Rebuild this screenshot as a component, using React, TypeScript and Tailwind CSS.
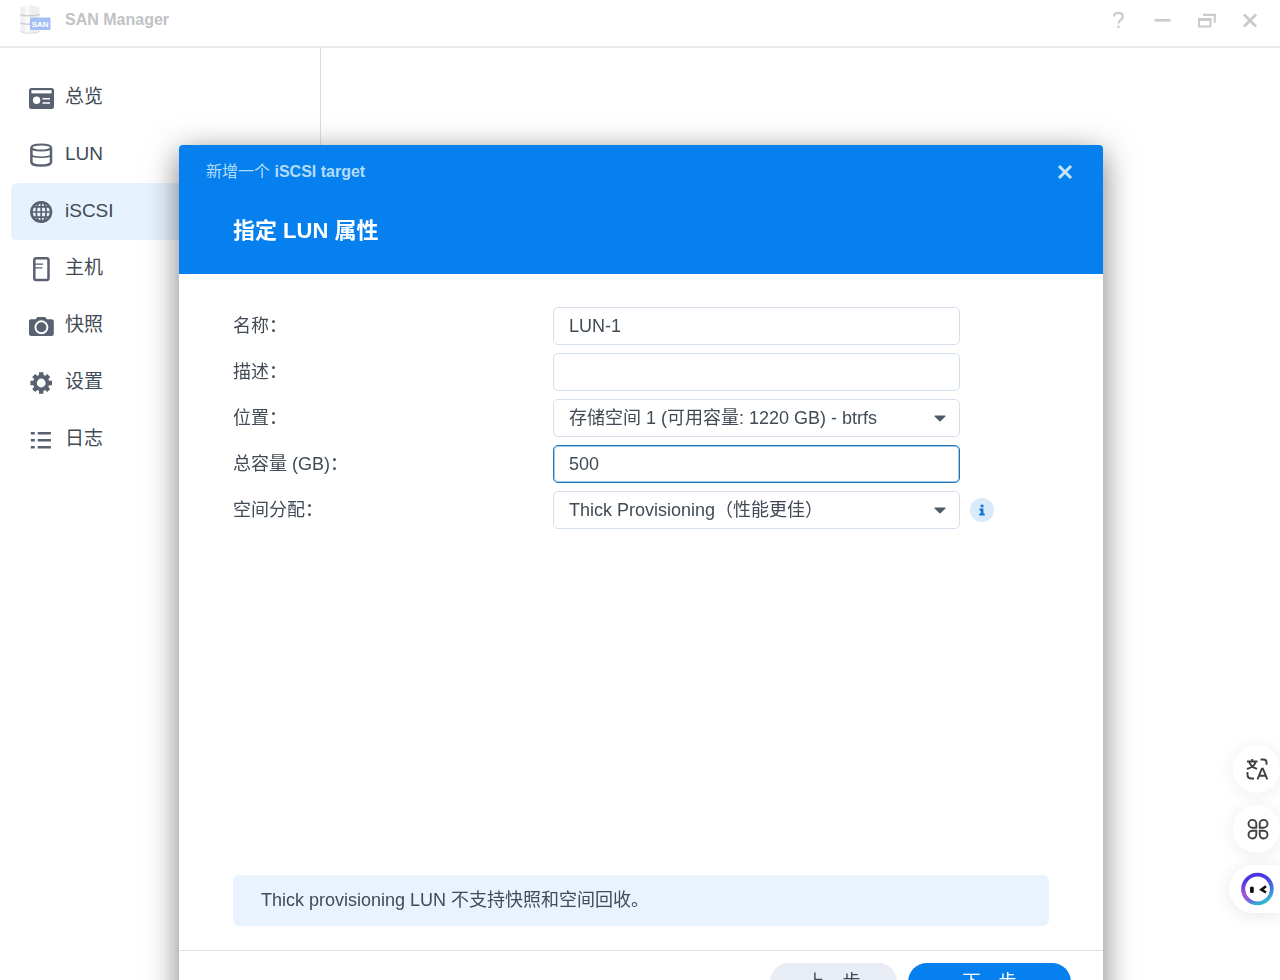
import { useState } from "react";
import type { ReactNode } from "react";
import clsx from "clsx";

type NavItem = {
  id: string;
  label: string;
  icon: ReactNode;
};

const NAV_ITEMS: NavItem[] = [
  {
    id: "overview",
    label: "总览",
    icon: (
      <>
        <rect x="1" y="3" width="25" height="21" rx="2.5" fill="currentColor" />
        <rect x="3.4" y="5.2" width="20.2" height="3.2" fill="#fff" />
        <circle cx="8.6" cy="15.3" r="3.7" fill="#fff" />
        <path d="M14.5 13.8h7.5M14.5 18h7.5" stroke="#fff" strokeWidth="1.6" />
      </>
    ),
  },
  {
    id: "lun",
    label: "LUN",
    icon: (
      <g fill="none" stroke="currentColor">
        <path d="M3.4 5.500v14.700c0 1.900 4.300 3.400 9.800 3.400s9.800-1.500 9.800-3.400V5.500" strokeWidth="2.5" />
        <ellipse cx="13.2" cy="5.500" rx="9.8" ry="3" strokeWidth="2" />
        <path d="M3.4 12.400c0 1.600 4.300 2.800 9.800 2.800s9.800-1.200 9.800-2.800" strokeWidth="1.5" />
      </g>
    ),
  },
  {
    id: "iscsi",
    label: "iSCSI",
    icon: (
      <g fill="none" stroke="currentColor" strokeWidth="1.7">
        <circle cx="13.2" cy="13" r="9.8" strokeWidth="2.6" />
        <ellipse cx="13.2" cy="13" rx="5" ry="9.8" />
        <path d="M13.2 3v20M3.5 13h19.5M5 7.8h16.4M5 18.2h16.4" />
      </g>
    ),
  },
  {
    id: "host",
    label: "主机",
    icon: (
      <g fill="none" stroke="currentColor">
        <rect x="6.3" y="2.2" width="14.2" height="21.8" rx="1.8" strokeWidth="2.5" />
        <path d="M7 8.2h8.2M7 11.8h7.4" strokeWidth="1.3" />
      </g>
    ),
  },
  {
    id: "snapshot",
    label: "快照",
    icon: (
      <>
        <path
          d="M3 6.2h4.6l1.8-2.3h7.8L19 6.2h4.6c1.3 0 2.2.9 2.2 2.2v12.4c0 1.3-.9 2.2-2.2 2.2H3.2C1.9 23 1 22.1 1 20.8V8.4C1 7.1 1.8 6.2 3 6.2z"
          fill="currentColor"
        />
        <circle cx="13.4" cy="14.3" r="6" fill="none" stroke="#fff" strokeWidth="1.9" />
      </>
    ),
  },
  {
    id: "settings",
    label: "设置",
    icon: (
      <>
        <g stroke="currentColor" strokeWidth="4.4">
          <path d="M13.2 2.2v21.6M2.4 13h21.6M5.7 5.5l15 15M20.7 5.5l-15 15" />
        </g>
        <circle cx="13.2" cy="13" r="8.2" fill="currentColor" />
        <circle cx="13.2" cy="13" r="4.4" fill="#fff" />
      </>
    ),
  },
  {
    id: "log",
    label: "日志",
    icon: (
      <path
        d="M2.8 6.2h4M2.8 13.2h4M2.8 20.2h4M9.7 6.2h13.2M9.7 13.2h13.2M9.7 20.2h13.2"
        stroke="currentColor"
        strokeWidth="2.5"
      />
    ),
  },
];

const FIELD = "h-[38px] w-full max-w-[407px] rounded-[5px] border bg-white px-[15px] text-[18px] text-[#414b55] outline-none";

function AppLogo() {
  return (
    <svg viewBox="0 0 32 30" className="h-[30px] w-8 shrink-0" aria-hidden="true">
      <path d="M1.500 3c0-3 19-3 19 0v23c0 3-19 3-19 0z" fill="#efefef" />
      <path d="M6 1.500h4.500v26.500H6z" fill="#fafafa" />
      <path d="M1.500 9c0 2.400 19 2.400 19 0M1.500 17.500c0 2.400 19 2.400 19 0" fill="none" stroke="#cdcdcd" strokeWidth="1.400" />
      <path d="M1.500 26c0 3 19 3 19 0" fill="none" stroke="#dadada" />
      <rect x="11" y="12.500" width="20.500" height="12.500" rx="1" fill="#a3bff3" />
      <text x="21.200" y="21.800" textAnchor="middle" fontSize="8" fontWeight="700" fontFamily="Liberation Sans, sans-serif" fill="#fff">
        SAN
      </text>
    </svg>
  );
}

function WindowButton({ label, children }: { label: string; children: ReactNode }) {
  return (
    <button type="button" aria-label={label} className="flex size-6 items-center justify-center text-[#cbcbcb]">
      <svg viewBox="0 0 20 20" className="size-5" fill="none" stroke="currentColor" strokeWidth="2.6">
        {children}
      </svg>
    </button>
  );
}

function FormRow({ id, label, children }: { id: string; label: string; children: ReactNode }) {
  return (
    <div className="flex items-center">
      <label htmlFor={id} className="w-80 shrink-0">
        {label}
      </label>
      <div className="flex flex-1 items-center gap-[10px]">{children}</div>
    </div>
  );
}

function SelectField({ id, options }: { id: string; options: string[] }) {
  return (
    <div className="relative w-full max-w-[407px]">
      <select id={id} className={clsx(FIELD, "appearance-none border-[#d3dfeb] pr-10")}>
        {options.map((o) => (
          <option key={o}>{o}</option>
        ))}
      </select>
      <svg viewBox="0 0 12 7" className="pointer-events-none absolute top-4 right-[14px] h-[7px] w-3" aria-hidden="true">
        <path d="M1 .5h10c.6 0 .8.6.4 1L6.800 6c-.5.500-1.100.500-1.600 0L.6 1.500C.2 1.100.400.5 1 .5z" fill="#505a64" />
      </svg>
    </div>
  );
}

function LunDialog() {
  const [name, setName] = useState("LUN-1");
  const [description, setDescription] = useState("");
  const [capacity, setCapacity] = useState("500");
  const [focused, setFocused] = useState("capacity");

  const border = (id: string) => (focused === id ? "border-[#1f78bd] ring-1 ring-inset ring-[#1f78bd]/40" : "border-[#d3dfeb]");

  return (
    <div className="fixed inset-0 flex items-start justify-center overflow-hidden pt-[145px] pl-[2px]">
      <div
        role="dialog"
        aria-labelledby="dialog-step"
        className="flex w-full max-w-[924px] shrink-0 flex-col rounded-[4px] bg-white shadow-[0_8px_32px_rgba(0,0,0,0.52)]"
      >
        {/* Header */}
        <div className="rounded-t-[4px] bg-[#0580ee] pb-[27px]">
          <div className="flex h-[54px] items-center justify-between pr-[28px] pl-[27px]">
            <p className="text-[16px] text-[#b4dcfa]">
              新增一个 <span className="font-bold">iSCSI target</span>
            </p>
            <button type="button" aria-label="关闭" className="flex size-5 items-center justify-center text-[#c3e4fb]">
              <svg viewBox="0 0 16 16" className="size-4" fill="none" stroke="currentColor" strokeWidth="3">
                <path d="M2 2l12 12M14 2L2 14" />
              </svg>
            </button>
          </div>
          <h2 id="dialog-step" className="mt-4 pl-[54px] text-[22px] leading-8 font-bold text-white">
            指定 LUN 属性
          </h2>
        </div>

        {/* Form */}
        <form className="flex min-h-[676px] flex-col px-[54px] pt-[33px] pb-6 text-[18px] text-[#414b55]">
          <div className="flex flex-col gap-2">
            <FormRow id="name" label="名称：">
              <input
                id="name"
                type="text"
                value={name}
                onChange={(e) => setName(e.target.value)}
                onFocus={() => setFocused("name")}
                className={clsx(FIELD, border("name"))}
              />
            </FormRow>
            <FormRow id="description" label="描述：">
              <input
                id="description"
                type="text"
                value={description}
                onChange={(e) => setDescription(e.target.value)}
                onFocus={() => setFocused("description")}
                className={clsx(FIELD, border("description"))}
              />
            </FormRow>
            <FormRow id="location" label="位置：">
              <SelectField id="location" options={["存储空间 1 (可用容量: 1220 GB) - btrfs"]} />
            </FormRow>
            <FormRow id="capacity" label="总容量 (GB)：">
              <input
                id="capacity"
                type="text"
                inputMode="numeric"
                value={capacity}
                onChange={(e) => setCapacity(e.target.value)}
                onFocus={() => setFocused("capacity")}
                className={clsx(FIELD, border("capacity"))}
              />
            </FormRow>
            <FormRow id="provisioning" label="空间分配：">
              <SelectField id="provisioning" options={["Thick Provisioning（性能更佳）", "Thin Provisioning"]} />
              <button type="button" aria-label="说明" className="size-6 shrink-0 rounded-full bg-[#d9eafa] text-[#0a76cf]">
                <svg viewBox="0 0 24 24" className="size-6" fill="currentColor">
                  <path d="M10.7 6.8h2.7v2.500h-2.700zM9.500 10.400h3.900v5h1.300v2H9.300v-2h1.500v-3H9.500z" />
                </svg>
              </button>
            </FormRow>
          </div>

          <p className="mt-auto rounded-md bg-[#e9f3fd] px-7 py-3 leading-[27px]">Thick provisioning LUN 不支持快照和空间回收。</p>
        </form>

        {/* Footer */}
        <div className="flex justify-end gap-[11px] border-t border-[#dfe3e7] px-8 py-3 text-[18px]">
          <button type="button" className="h-[38px] w-[127px] rounded-full bg-[#e8ecf4] text-[#414b55]">
            上一步
          </button>
          <button type="button" className="h-[38px] w-[163px] rounded-full bg-[#0580ee] text-white">
            下一步
          </button>
        </div>
      </div>
    </div>
  );
}

function FloatingTools() {
  const round = "flex h-12 w-[47px] items-center justify-center rounded-full bg-white text-[#414141] shadow-[0_2px_18px_rgba(0,0,0,0.08)]";
  return (
    <div className="fixed right-0 bottom-[67px] flex flex-col items-end gap-3">
      <button type="button" aria-label="翻译" className={round}>
        <svg viewBox="0 0 24 24" className="size-6" fill="none" stroke="currentColor" strokeWidth="1.9">
          <path d="M2 4.500h10.500M7.200 2v2.500M4 4.500c1 3.600 3.800 6 8 7.300M10.700 4.500C9.800 8 7 10.600 2 12" />
          <path d="M15.500 2.500h3c2 0 3 1 3 3v2.200M2.500 15v2.500c0 2.600 1.200 4 4 4H9" />
          <path d="M12.500 22.300l4.400-10.600h1l4.400 10.600M14 18.700h6.800" />
        </svg>
      </button>
      <button type="button" aria-label="应用" className={round}>
        <svg viewBox="0 0 24 24" className="size-6" fill="none" stroke="currentColor" strokeWidth="1.9" strokeLinejoin="round">
          <path d="M11.300 10.700H7.200a3.900 3.900 0 1 1 4.100-4.100z" />
          <path d="M14.700 10.700h4.100a3.900 3.900 0 1 0-4.100-4.100z" />
          <path d="M11.300 13.700H7.200a3.900 3.900 0 1 0 4.100 4.100z" />
          <path d="M14.700 13.700h4.100a3.900 3.900 0 1 1-4.100 4.100z" />
        </svg>
      </button>
      <button
        type="button"
        aria-label="助手"
        className="flex h-12 w-[51px] items-center justify-start rounded-l-full bg-white pl-3 shadow-[0_2px_18px_rgba(0,0,0,0.1)]"
      >
        <svg viewBox="0 0 34 34" className="size-[34px] shrink-0">
          <defs>
            <linearGradient id="ring" x1="0.2" y1="0" x2="0.7" y2="1">
              <stop offset="0" stopColor="#4a35e0" />
              <stop offset="0.35" stopColor="#4b3ae6" />
              <stop offset="0.7" stopColor="#3f7be2" />
              <stop offset="1" stopColor="#2fb9cf" />
            </linearGradient>
            <radialGradient id="ring-glow" cx="0.05" cy="0.7" r="0.5">
              <stop offset="0" stopColor="#b04fd0" />
              <stop offset="1" stopColor="#b04fd0" stopOpacity="0" />
            </radialGradient>
          </defs>
          <circle cx="16.500" cy="17" r="14.300" fill="none" stroke="url(#ring)" strokeWidth="3.800" />
          <circle cx="16.500" cy="17" r="14.300" fill="none" stroke="url(#ring-glow)" strokeWidth="3.800" />
          <rect x="9" y="14.500" width="3.800" height="6.500" rx="1.600" fill="#111" />
          <path d="M25 14.300l-4.600 3.400 4.600 2.800" fill="none" stroke="#111" strokeWidth="2.600" />
        </svg>
      </button>
    </div>
  );
}

export default function App() {
  const [active, setActive] = useState("iscsi");

  return (
    <div className="flex h-screen flex-col overflow-hidden bg-white font-['Liberation_Sans','Noto_Sans_CJK_SC',sans-serif] text-[#414b55]">
      {/* Title bar */}
      <header className="flex h-12 shrink-0 items-center justify-between border-b-2 border-[#e9e9e9] pr-[18px] pb-[6px] pl-[19px]">
        <div className="flex items-center gap-[14px]">
          <AppLogo />
          <h1 className="text-[16px] font-bold text-[#bfc2c5]">SAN Manager</h1>
        </div>
        <div className="flex gap-5">
          <WindowButton label="帮助">
            <path d="M6 6.500C6 4 7.800 2.800 10.400 2.800c2.600 0 4.400 1.400 4.400 3.700 0 3.300-4.400 3.300-4.400 7M10.400 15.400v2.600" strokeWidth="2.200" />
          </WindowButton>
          <WindowButton label="最小化">
            <path d="M2.500 10.300h16" />
          </WindowButton>
          <WindowButton label="还原">
            <path d="M7 4.800h11.800v7.700" strokeWidth="2.200" />
            <path d="M3 9h11.500v7.500H3z" strokeWidth="2" />
            <path d="M2 9.500h13.500" strokeWidth="3" />
          </WindowButton>
          <WindowButton label="关闭">
            <path d="M4 4.500l12 12M16 4.500l-12 12" strokeWidth="2.800" />
          </WindowButton>
        </div>
      </header>

      <div className="flex min-h-0 flex-1">
        <nav className="w-[321px] shrink-0 border-r border-[#dcdfe2] px-[11px] pt-[21px]">
          {NAV_ITEMS.map((item) => (
            <button
              key={item.id}
              type="button"
              onClick={() => setActive(item.id)}
              className={clsx(
                "flex h-[57px] w-full items-center gap-[11px] rounded-md pl-[17px] text-[19px]",
                active === item.id && "bg-[#e6f2fe]"
              )}
            >
              <svg viewBox="0 0 26 26" className="size-[26px] shrink-0 text-[#5a6171]" aria-hidden="true">
                {item.icon}
              </svg>
              {item.label}
            </button>
          ))}
        </nav>
        <main className="flex-1" />
      </div>

      <LunDialog />
      <FloatingTools />
    </div>
  );
}
